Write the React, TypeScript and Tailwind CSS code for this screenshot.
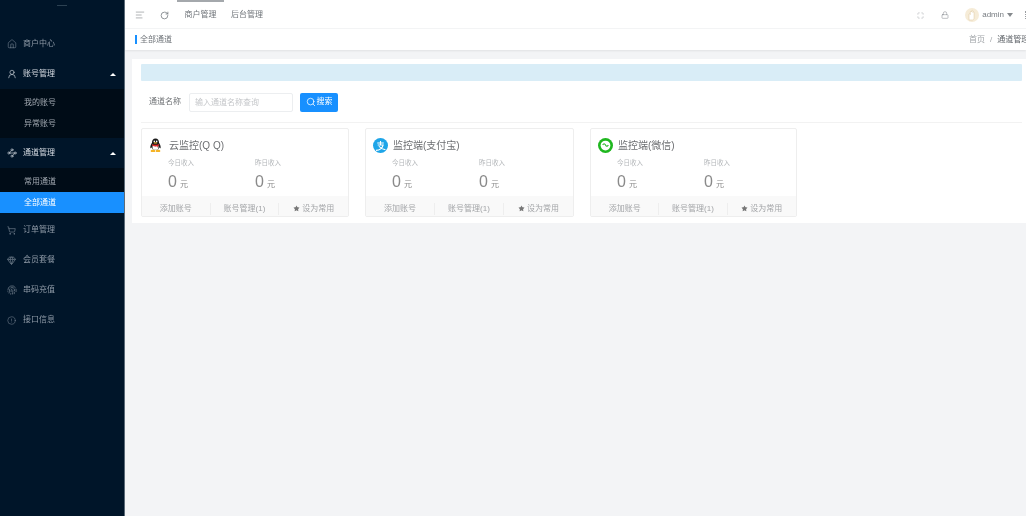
import { ReactNode } from "react";
import {
  CircleAlert,
  Fingerprint,
  Gem,
  House,
  Lock,
  Maximize,
  RotateCw,
  Search,
  ShoppingCart,
  Star,
  TextAlignStart,
  UserRound,
  Waypoints,
} from "lucide-react";

const font = "font-['Liberation_Sans','Noto_Sans_CJK_SC',sans-serif]";

function NavItem({ icon, label, open, bright }: { icon: ReactNode; label: string; open?: boolean; bright?: boolean }) {
  return (
    <div className={`flex h-[30px] items-center pl-[7px] pr-[8px] text-[8px] ${bright ? "text-[#d5dbe2]" : "text-[#8d99a6]"}`}>
      <span className="flex w-[16px] shrink-0 items-center">{icon}</span>
      <span className="flex-1">{label}</span>
      {open && <span className="h-0 w-0 border-x-[3px] border-b-[3px] border-x-transparent border-b-white" />}
    </div>
  );
}

function SubMenu({ items, active, className }: { items: string[]; active?: string; className: string }) {
  return (
    <div className={`bg-[#000c17] pt-[3px] ${className}`}>
      {items.map((item) => (
        <div
          key={item}
          className={`flex h-[21px] items-center pl-[24px] text-[8px] ${item === active ? "bg-[#1890ff] text-white" : "text-[#a0a8b0]"}`}
        >
          {item}
        </div>
      ))}
    </div>
  );
}

function Sidebar() {
  return (
    <aside className="flex w-[125px] shrink-0 flex-col border-r border-[#5c6b78] bg-[#001529]">
      <div className="flex h-[29px] justify-center pt-[5px]">
        <div className="h-px w-[10px] bg-[#2c4152]" />
      </div>
      <NavItem icon={<House size={10} strokeWidth={1.2} />} label="商户中心" />
      <NavItem icon={<UserRound size={10} strokeWidth={1.5} />} label="账号管理" open bright />
      <SubMenu items={["我的账号", "异常账号"]} className="pb-[4px]" />
      <NavItem icon={<Waypoints size={10} strokeWidth={1.5} />} label="通道管理" open bright />
      <SubMenu items={["常用通道", "全部通道"]} active="全部通道" className="pb-0" />
      <div className="h-[2px]" />
      <NavItem icon={<ShoppingCart size={9} strokeWidth={1.4} />} label="订单管理" />
      <NavItem icon={<Gem size={9} strokeWidth={1.5} />} label="会员套餐" />
      <NavItem icon={<Fingerprint size={10} strokeWidth={1.4} />} label="串码充值" />
      <NavItem icon={<CircleAlert size={9} strokeWidth={1.2} />} label="接口信息" />
    </aside>
  );
}

function Avatar() {
  return (
    <svg viewBox="0 0 14 14" className="ml-[16px] h-[14px] w-[14px]">
      <circle cx="7" cy="7" r="7" fill="#f6ecd8" />
      <path d="M4 12V6.500c0-1 1.200-1 1.300 0V4c0-1 1.200-1 1.300 0V3c0-1 1.300-1 1.300 0v1.500c0-1 1.200-1 1.200 0V10c0 1-.8 2-1.500 2z" fill="#fff" stroke="#e2cfa8" strokeWidth=".6" />
    </svg>
  );
}

function TopBar() {
  return (
    <header className="bg-white">
      <div className="flex h-[29px] items-center border-b border-[#f4f5f6] pl-[10px] pt-[2px] text-[8px] text-[#6f7479]">
        <TextAlignStart size={10} strokeWidth={1.3} />
        <RotateCw size={9} strokeWidth={2} className="ml-[15px]" />
        <div className="relative ml-[8px] flex h-[27px] w-[47px] items-center justify-center">
          <span className="absolute inset-x-0 -top-[2px] h-[2px] bg-[#a4a8ac]" />
          商户管理
        </div>
        <div className="flex h-full w-[46px] items-center justify-center">后台管理</div>
        <div className="ml-auto flex items-center text-[#777c81]">
          <Maximize size={7} strokeWidth={1.3} className="text-[#8f9397]" />
          <Lock size={8} strokeWidth={1.4} className="ml-[17px]" />
          <Avatar />
          <span className="ml-[3px] text-[8px]">admin</span>
          <span className="ml-[3px] h-0 w-0 border-x-[3px] border-t-[4px] border-x-transparent border-t-[#85898d]" />
          <span className="ml-[12px] h-[8px] border-l border-dotted border-[#9a9da1]" />
        </div>
      </div>
      <div className="flex h-[21px] items-center pl-[10px] text-[8px] text-[#6f7479] shadow-[0_1px_2px_rgba(0,0,0,0.08)]">
        <span className="mr-[3px] h-[9px] w-[2px] bg-[#1890ff]" />
        全部通道
        <span className="ml-auto w-[57px] whitespace-nowrap text-[#9fa3a7]">
          首页<span className="mx-[5px]">/</span><span className="text-[#60656a]">通道管理</span>
        </span>
      </div>
    </header>
  );
}

function QQIcon() {
  return (
    <svg viewBox="0 0 14 16" className="h-[15px] w-[13px]">
      <path d="M7 .5C4.400.5 3.200 2.500 3.200 5 1.800 7.200 1 9.600 1.600 11c.4.300 1-.4 1.400-1 .2 1 .6 2 1.400 2.700h5.200c.8-.7 1.200-1.700 1.400-2.700.4.600 1 1.300 1.400 1 .6-1.400-.2-3.800-1.600-6C10.800 2.500 9.600.5 7 .5z" fill="#1b1b1b" />
      <path d="M4 8c1.800 1 4.200 1 6 0 .5 2 .1 3.600-.8 4.700H4.800C3.900 11.600 3.500 10 4 8z" fill="#fff" />
      <path d="M3.200 6.300c2.200 1.200 5.400 1.200 7.600 0l.2 1.500-1.500.6v2l-1.300-1.500c-1.500.2-3 .1-4.600-.6z" fill="#e52b2b" />
      <ellipse cx="5.700" cy="3.600" rx=".8" ry="1.100" fill="#fff" />
      <ellipse cx="8.300" cy="3.600" rx=".8" ry="1.100" fill="#fff" />
      <path d="M4.800 5.200c1.400-.8 3-.8 4.400 0-1.400.8-3 .8-4.400 0z" fill="#f5b324" />
      <ellipse cx="4.300" cy="13.800" rx="2.600" ry="1.300" fill="#f5b324" />
      <ellipse cx="9.700" cy="13.800" rx="2.600" ry="1.300" fill="#f5b324" />
    </svg>
  );
}

function AlipayIcon() {
  return (
    <svg viewBox="0 0 16 16" className="h-[15px] w-[15px]">
      <circle cx="8" cy="8" r="8" fill="#1ea5e8" />
      <path d="M4.500 5.300h7M8 3.200v4.300M5 7.500h5.800C10 10.500 7.500 12.800 3.200 13.200M6.300 8.800c1.500 2 4 3.300 7 3.800" fill="none" stroke="#fff" strokeWidth="1.200" />
    </svg>
  );
}

function WechatIcon() {
  return (
    <svg viewBox="0 0 16 16" className="h-[15px] w-[15px]">
      <circle cx="8" cy="8" r="8" fill="#1fb71f" />
      <circle cx="8" cy="8" r="5.200" fill="#fff" />
      <path d="M5 7.500c1-1.800 2-1.800 3 0s2 1.800 3 0" fill="none" stroke="#1fb71f" strokeWidth="1.200" />
    </svg>
  );
}

function Stat({ label }: { label: string }) {
  return (
    <div className="w-[87px]">
      <div className="text-[6.500px] leading-[8px] text-[#b4b7ba]">{label}</div>
      <div className="mt-[6px] flex items-baseline text-[#8a8a8a]">
        <span className="text-[16px] leading-[18px]">0</span>
        <span className="ml-[3px] text-[8px]">元</span>
      </div>
    </div>
  );
}

function ChannelCard({ icon, title, width }: { icon: ReactNode; title: string; width: string }) {
  return (
    <div className={`flex h-[89px] flex-col overflow-hidden rounded-[2px] border border-[#eeeeee] bg-white ${width}`}>
      <div className="flex-1">
        <div className="flex h-[14px] items-center pl-[7px] pt-[16px]">
          <span className="flex w-[20px] justify-start">{icon}</span>
          <span className="text-[10px] text-[#6d6f72]">{title}</span>
        </div>
        <div className="flex pl-[26px] pt-[14px]">
          <Stat label="今日收入" />
          <Stat label="昨日收入" />
        </div>
      </div>
      <div className="grid h-[20px] grid-cols-3 items-center bg-[#f9f9f9] pt-[5px] text-center text-[8px] text-[#a3a5a8]">
        <span className="border-r border-[#eeeeee]">添加账号</span>
        <span className="border-r border-[#eeeeee]">账号管理(1)</span>
        <span className="flex items-center justify-center gap-[2px]">
          <Star size={7} fill="#777" strokeWidth={0} />
          设为常用
        </span>
      </div>
    </div>
  );
}

export default function App() {
  return (
    <div className={`flex h-[516px] w-[1026px] overflow-hidden bg-[#f3f4f6] blur-[0.5px] ${font}`}>
      <Sidebar />
      <main className="min-w-0 flex-1">
        <TopBar />
        <section className="ml-[7px] mt-[9px] h-[164px] bg-white pl-[9px] pr-[4px] pt-[5px]">
          <div className="h-[17px] rounded-[1px] bg-[#d9edf7]" />
          <div className="mt-[11px] flex h-[20px] items-center">
            <span className="ml-[8px] text-[8px] text-[#6f7275]">通道名称</span>
            <input
              readOnly
              placeholder="输入通道名称查询"
              className="ml-[8px] h-[19px] w-[104px] rounded-[2px] border border-[#eceef0] px-[5px] text-[8px] outline-none placeholder:text-[#c4c6c9]"
            />
            <button className="ml-[7px] flex h-[19px] w-[38px] items-center justify-center gap-[1px] rounded-[2px] bg-[#1890ff] text-[8px] text-white">
              <Search size={10} strokeWidth={1.8} />
              搜索
            </button>
          </div>
          <div className="mt-[10px] h-px bg-[#f2f2f2]" />
          <div className="mt-[5px] flex gap-[16px]">
            <ChannelCard icon={<QQIcon />} title="云监控(Q Q)" width="w-[208px]" />
            <ChannelCard icon={<AlipayIcon />} title="监控端(支付宝)" width="w-[209px]" />
            <ChannelCard icon={<WechatIcon />} title="监控端(微信)" width="w-[207px]" />
          </div>
        </section>
      </main>
    </div>
  );
}
